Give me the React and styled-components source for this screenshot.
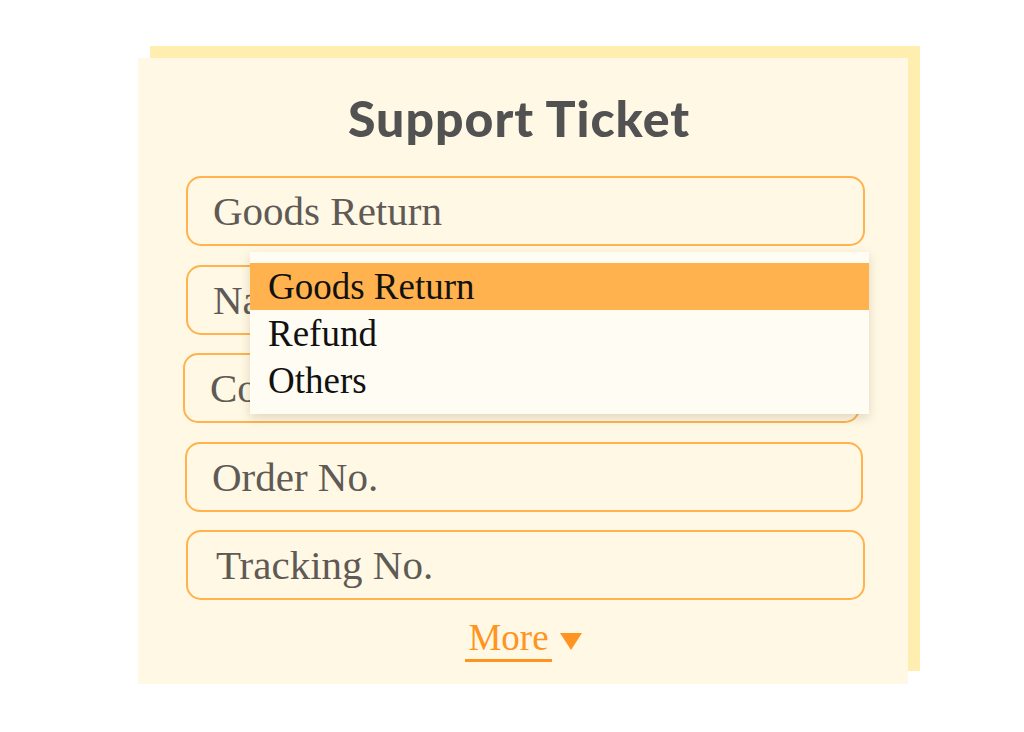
import React from "react";
import styled, { createGlobalStyle } from "styled-components";

const Global = createGlobalStyle`
  html, body { margin: 0; padding: 0; background: #ffffff; }
  body { width: 1024px; height: 732px; overflow: hidden; }
`;

const Stage = styled.div`
  padding: 46px 0 0 138px;
`;

const Backdrop = styled.div`
  position: relative;
  width: 770px;
  height: 626px;
  margin-top: 12px;
  &::before {
    content: "";
    position: absolute;
    left: 12px;
    top: -12px;
    width: 770px;
    height: 625px;
    background: #ffeeb0;
  }
`;

const Card = styled.div`
  position: relative;
  box-sizing: border-box;
  width: 770px;
  height: 626px;
  background: #fff8e4;
  padding: 32px 43px 0 48px;
  display: flex;
  flex-direction: column;
`;

const Title = styled.h1`
  margin: 0 0 30px 0;
  text-align: center;
  font-family: "Lato", "DejaVu Sans", sans-serif;
  font-weight: 900;
  font-size: 50px;
  line-height: 56px;
  color: #525252;
  letter-spacing: 1px;
  padding-right: 13px;
`;

const Fields = styled.div`
  position: relative;
  display: flex;
  flex-direction: column;
  gap: 18.5px;
`;

const Field = styled.div`
  box-sizing: border-box;
  height: 70px;
  border: 2.5px solid #ffb24d;
  border-radius: 15px;
  padding: 0 0 0 ${(p) => p.$indent || 25}px;
  display: flex;
  align-items: center;
  font-family: "Liberation Serif", serif;
  font-size: 41px;
  color: #5f5a55;
  margin-left: ${(p) => p.$shift || 0}px;
  margin-right: ${(p) => p.$shiftR || 0}px;
`;

const Menu = styled.div`
  position: absolute;
  left: 64px;
  top: 76px;
  width: 619px;
  box-sizing: border-box;
  padding: 11px 0 10px 0;
  background: #fffcf3;
  box-shadow: 0 4px 10px rgba(120, 100, 60, 0.22);
`;

const Option = styled.div`
  height: 47px;
  display: flex;
  align-items: center;
  padding-left: 18px;
  font-family: "Liberation Serif", serif;
  font-size: 37px;
  color: #111;
  background: ${(p) => (p.$active ? "#ffb24d" : "transparent")};
`;

const MoreRow = styled.div`
  display: flex;
  justify-content: center;
  align-items: center;
  gap: 8px;
  margin-top: 18px;
  padding-right: 4px;
`;

const MoreLink = styled.span`
  font-family: "Liberation Serif", serif;
  font-size: 37px;
  color: #ff9420;
  padding: 0 3px 1px 3px;
  border-bottom: 3px solid #ff9420;
  line-height: 40px;
`;

const Arrow = styled.span`
  width: 0;
  height: 0;
  border-left: 11px solid transparent;
  border-right: 11px solid transparent;
  border-top: 17px solid #ff9420;
  margin-top: 2px;
`;

export default function App() {
  return (
    <>
      <Global />
      <Stage>
        <Backdrop>
          <Card>
            <Title>Support Ticket</Title>
            <Fields>
              <Field>Goods Return</Field>
              <Field>Name</Field>
              <Field $shift={-3} $shiftR={5}>Contact</Field>
              <Field $shift={-1} $shiftR={2}>Order No.</Field>
              <Field $indent={28}>Tracking No.</Field>
              <Menu>
                <Option $active>Goods Return</Option>
                <Option>Refund</Option>
                <Option>Others</Option>
              </Menu>
            </Fields>
            <MoreRow>
              <MoreLink>More</MoreLink>
              <Arrow />
            </MoreRow>
          </Card>
        </Backdrop>
      </Stage>
    </>
  );
}
